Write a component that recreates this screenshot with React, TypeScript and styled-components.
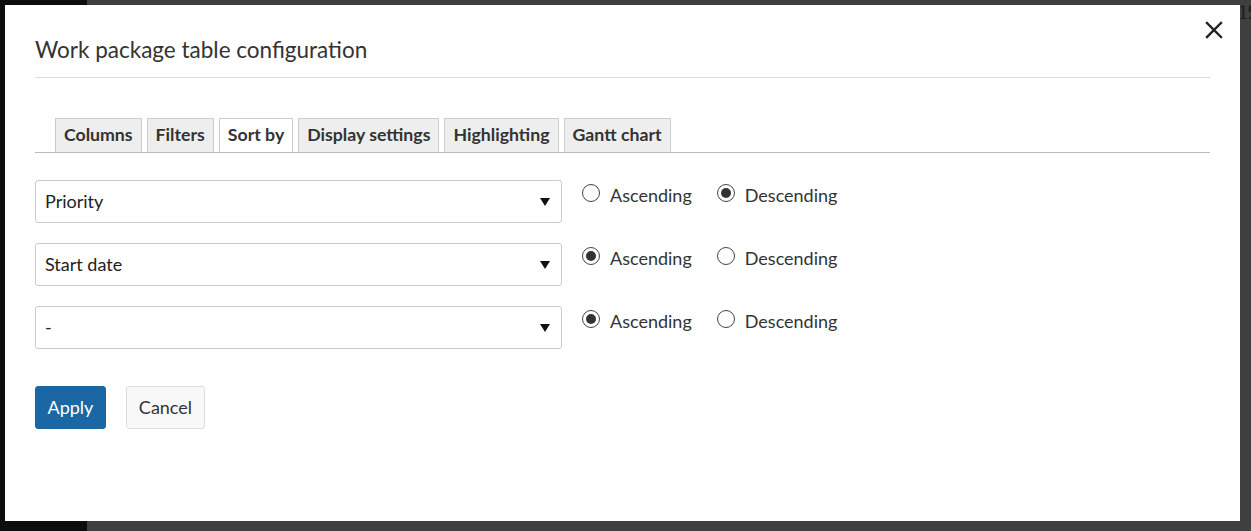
import React from "react";
import styled, { createGlobalStyle } from "styled-components";

const Global = createGlobalStyle`
  html, body { margin: 0; padding: 0; overflow: hidden; }
  body { font-family: Lato, "Noto Sans", sans-serif; }
`;

const Page = styled.div`
  position: relative;
  width: 1251px;
  height: 531px;
  display: flex;
  background: #3f3f3f;
  overflow: hidden;
`;

const Sidebar = styled.div`
  width: 87px;
  flex-shrink: 0;
  background: #0c0e0d;
`;

const Main = styled.div`
  flex: 1;
  min-width: 0;
  overflow: hidden;
  padding: 2px 0 0 1151px;
  font-family: "Liberation Serif", serif;
  font-size: 20px;
  color: #1a1a1a;
  line-height: 1;
  white-space: nowrap;
`;

const Modal = styled.div`
  position: absolute;
  left: 5px;
  top: 5px;
  width: 1235px;
  height: 516px;
  box-sizing: border-box;
  background: #fff;
  padding: 0 30px;
  color: #333;
`;

const Header = styled.div`
  padding-top: 30px;
  height: 73px;
  box-sizing: border-box;
  border-bottom: 1px solid #dddddd;
`;

const Title = styled.h1`
  margin: 0;
  font-size: 22.5px;
  font-weight: 400;
  line-height: 30px;
  color: #333;
`;

const Close = styled.button`
  position: absolute;
  right: 16px;
  top: 15px;
  width: 20px;
  height: 20px;
  border: 0;
  padding: 0;
  background: none;
  display: flex;
  align-items: center;
  justify-content: center;
`;

const Tabs = styled.div`
  margin-top: 40px;
  display: flex;
  gap: 5px;
  padding-left: 20px;
  border-bottom: 1px solid #bbbbbb;
`;

const Tab = styled.div<{ $active?: boolean }>`
  height: 34px;
  box-sizing: border-box;
  padding: 0 8px 3px;
  display: flex;
  align-items: center;
  border: 1px solid #cccccc;
  border-bottom: 0;
  background: ${(p) => (p.$active ? "#fff" : "#eeeeee")};
  font-size: 17.7px;
  font-weight: 700;
  color: #333;
`;

const Rows = styled.div`
  margin-top: 27px;
  display: flex;
  flex-direction: column;
  gap: 20px;
`;

const Row = styled.div`
  display: flex;
  align-items: flex-start;
`;

const Select = styled.div`
  width: 527px;
  height: 43px;
  box-sizing: border-box;
  border: 1px solid #cccccc;
  border-radius: 3px;
  padding: 0 9px 1px;
  display: flex;
  align-items: center;
  justify-content: space-between;
  font-size: 18px;
  color: #222;
`;

const Arrow = styled.span`
  width: 0;
  height: 0;
  border-left: 5px solid transparent;
  border-right: 5px solid transparent;
  border-top: 8px solid #111;
  margin-right: 2px;
  margin-top: 2px;
`;

const Radios = styled.div`
  display: flex;
  gap: 25px;
  margin-left: 20px;
  margin-top: 3px;
`;

const RadioLabel = styled.label`
  display: flex;
  align-items: center;
  gap: 10px;
  font-size: 18px;
  color: #333;
  line-height: 24px;
`;

const Circle = styled.span<{ $checked?: boolean }>`
  width: 18px;
  height: 18px;
  box-sizing: border-box;
  border-radius: 50%;
  border: 1px solid #444;
  background: #fff;
  display: flex;
  align-items: center;
  justify-content: center;
  margin-top: -5px;
  &::after {
    content: "";
    width: 10px;
    height: 10px;
    border-radius: 50%;
    background: ${(p) => (p.$checked ? "#333" : "transparent")};
  }
`;

const Buttons = styled.div`
  margin-top: 37px;
  display: flex;
  gap: 20px;
`;

const Button = styled.button<{ $primary?: boolean }>`
  height: 43px;
  box-sizing: border-box;
  padding: 0 ${(p) => (p.$primary ? 11.5 : 12)}px 1px;
  border-radius: 3px;
  border: 1px solid ${(p) => (p.$primary ? "#1a67a3" : "#dddddd")};
  background: ${(p) => (p.$primary ? "#1a67a3" : "#f8f8f8")};
  color: ${(p) => (p.$primary ? "#fff" : "#333")};
  font-family: Lato, sans-serif;
  font-size: 18px;
`;

const rows = [
  { label: "Priority", asc: false },
  { label: "Start date", asc: true },
  { label: "-", asc: true },
];

const tabs = ["Columns", "Filters", "Sort by", "Display settings", "Highlighting", "Gantt chart"];

export default function App() {
  return (
    <>
      <Global />
      <Page>
        <Sidebar />
        <Main>19</Main>
        <Modal>
          <Close aria-label="Close">
            <svg width="18" height="18" viewBox="0 0 18 18">
              <path d="M2 2 L16 16 M16 2 L2 16" stroke="#222" strokeWidth="2.4" strokeLinecap="square" />
            </svg>
          </Close>
          <Header>
            <Title>Work package table configuration</Title>
          </Header>
          <Tabs>
            {tabs.map((t) => (
              <Tab key={t} $active={t === "Sort by"}>
                {t}
              </Tab>
            ))}
          </Tabs>
          <Rows>
            {rows.map((r, i) => (
              <Row key={i}>
                <Select>
                  <span>{r.label}</span>
                  <Arrow />
                </Select>
                <Radios>
                  <RadioLabel>
                    <Circle $checked={r.asc} />
                    Ascending
                  </RadioLabel>
                  <RadioLabel>
                    <Circle $checked={!r.asc} />
                    Descending
                  </RadioLabel>
                </Radios>
              </Row>
            ))}
          </Rows>
          <Buttons>
            <Button $primary>Apply</Button>
            <Button>Cancel</Button>
          </Buttons>
        </Modal>
      </Page>
    </>
  );
}
